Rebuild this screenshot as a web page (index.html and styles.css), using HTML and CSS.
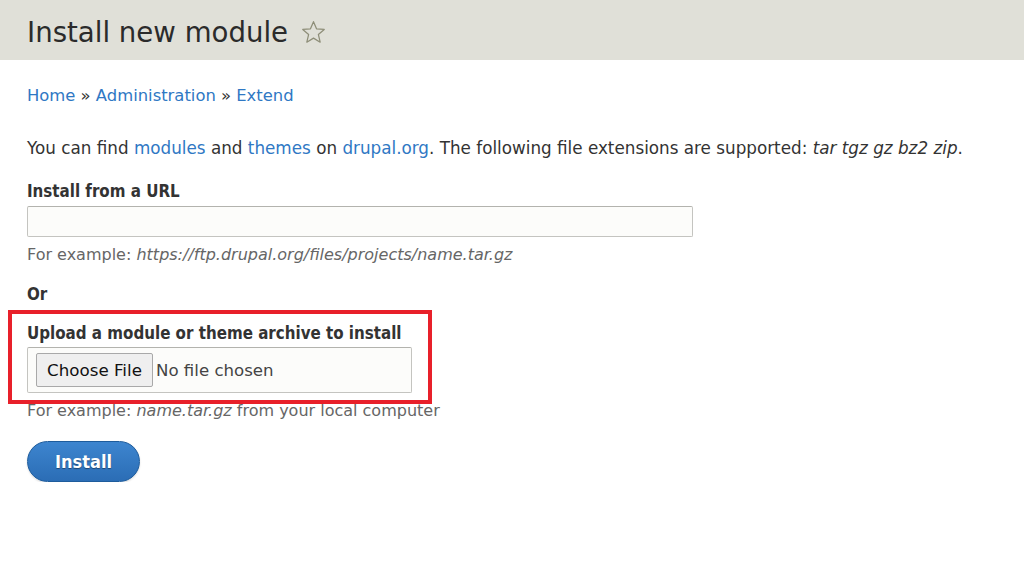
FILE: index.html
```html
<!DOCTYPE html>
<html lang="en">
<head>
<meta charset="utf-8">
<title>Install new module</title>
<link rel="stylesheet" href="styles.css">
</head>
<body>
<header class="page-header">
  <h1 class="page-title">Install new module</h1>
  <svg class="star" width="25" height="25" viewBox="0 0 24 24" aria-hidden="true">
    <path d="M12 1.6 L14.9 8.5 L22.3 9.1 L16.7 14 L18.4 21.3 L12 17.4 L5.6 21.3 L7.3 14 L1.7 9.1 L9.1 8.5 Z" fill="none" stroke="#8e8e78" stroke-width="1.2" stroke-linejoin="round"/>
  </svg>
</header>
<main class="content">
  <nav class="breadcrumb">
    <a href="#">Home</a> » <a href="#">Administration</a> » <a href="#">Extend</a>
  </nav>
  <p class="intro">You can find <a href="#">modules</a> and <a href="#">themes</a> on <a href="#">drupal.org</a>. The following file extensions are supported: <em>tar tgz gz bz2 zip</em>.</p>

  <div class="field">
    <label class="label">Install from a URL</label>
    <div class="text-input"></div>
    <div class="desc">For example: <em>https://ftp.drupal.org/files/projects/name.tar.gz</em></div>
  </div>

  <div class="or">Or</div>

  <div class="highlight">
    <label class="label">Upload a module or theme archive to install</label>
    <div class="file-input">
      <span class="file-btn">Choose File</span>
      <span class="file-none">No file chosen</span>
    </div>
  </div>
  <div class="desc desc-file">For example: <em>name.tar.gz</em> from your local computer</div>

  <button class="install" type="button">Install</button>
</main>
</body>
</html>
```

FILE: styles.css
```css
html, body {
  margin: 0;
  padding: 0;
  background: #ffffff;
}
body {
  font-family: "DejaVu Sans", "Liberation Sans", sans-serif;
  font-size: 16.8px;
  color: #333333;
}
a {
  color: #2f78c4;
  text-decoration: none;
}
.page-header {
  background: #e0e0d8;
  height: 60px;
  box-sizing: border-box;
  padding: 6px 0 0 27px;
  display: flex;
  align-items: center;
  gap: 13px;
}
.page-title {
  margin: 0;
  font-size: 27.6px;
  font-weight: normal;
  color: #2b2b2b;
  line-height: 1;
}
.star {
  display: block;
  margin-top: -2px;
}
.content {
  padding: 0 27px;
}
.breadcrumb {
  margin-top: 25px;
  line-height: 22px;
  font-size: 16.4px;
  color: #333;
}
.intro {
  margin: 30px 0 0;
  line-height: 22px;
}
.field {
  margin-top: 21px;
}
.label {
  display: block;
  font-family: "DejaVu Sans Condensed", "DejaVu Sans", sans-serif;
  font-weight: bold;
  font-size: 16.8px;
  line-height: 22px;
}
.text-input {
  margin-top: 4px;
  width: 664px;
  height: 29px;
  border: 1px solid #c4c4c0;
  border-top-color: #b3b3ae;
  border-radius: 2px;
  background: #fcfcfa;
}
.desc {
  color: #666666;
  font-size: 16px;
  line-height: 20px;
  margin-top: 8px;
}
.or {
  margin-top: 18px;
  font-family: "DejaVu Sans Condensed", "DejaVu Sans", sans-serif;
  font-weight: bold;
  line-height: 22px;
}
.highlight {
  margin: 5px 0 0 -19px;
  width: 401px;
  border: 4px solid #e8202a;
  padding: 8px 0 7px 15px;
}
.file-input {
  margin-top: 3px;
  box-sizing: border-box;
  width: 385px;
  height: 46px;
  border: 1px solid #c4c4c0;
  border-top-color: #b3b3ae;
  border-radius: 2px;
  background: #fcfcfa;
  display: flex;
  align-items: center;
  padding-left: 8px;
}
.file-btn {
  display: flex;
  align-items: center;
  justify-content: center;
  width: 117px;
  height: 34px;
  box-sizing: border-box;
  border: 1px solid #a9a9a9;
  border-radius: 2px;
  background: #efefef;
  color: #111;
  font-size: 16.7px;
}
.file-none {
  margin-left: 3px;
  color: #444;
  font-size: 16.6px;
}
.desc-file {
  margin-top: -3px;
}
.install {
  margin-top: 20px;
  width: 113px;
  height: 41px;
  border-radius: 21px;
  border: 1px solid #1e5c9c;
  background: linear-gradient(#3d85cf, #2b6db5);
  color: #ffffff;
  font-family: "DejaVu Sans Condensed", "DejaVu Sans", sans-serif;
  font-weight: bold;
  font-size: 18px;
  text-shadow: 0 1px 1px rgba(0,0,0,0.4);
  box-shadow: 0 1px 2px rgba(0,0,0,0.15);
  padding: 0;
}
```
